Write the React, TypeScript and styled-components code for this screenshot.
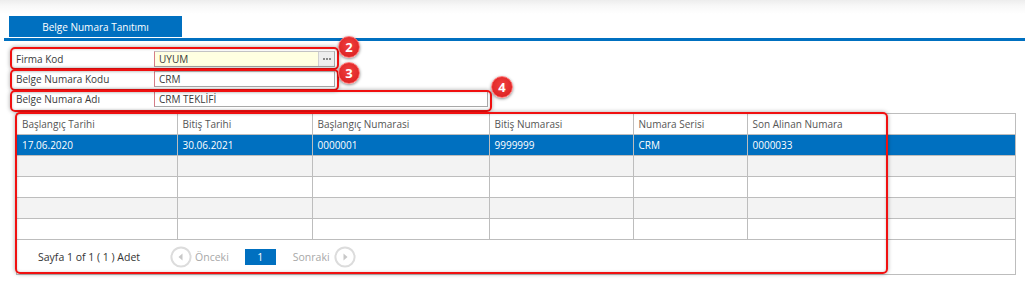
import styled, { createGlobalStyle } from "styled-components";

const GlobalStyle = createGlobalStyle`
  html, body {
    margin: 0;
    padding: 0;
    background: #fff;
  }
  body {
    font-family: "Open Sans", "Noto Sans", sans-serif;
    font-size: 10px;
    color: #333;
  }
`;

const columns = [
  { title: "Başlangıç Tarihi", width: 160 },
  { title: "Bitiş Tarihi", width: 135 },
  { title: "Başlangıç Numarasi", width: 177 },
  { title: "Bitiş Numarasi", width: 144 },
  { title: "Numara Serisi", width: 114 },
  { title: "Son Alinan Numara" },
];

const rows = [
  ["17.06.2020", "30.06.2021", "0000001", "9999999", "CRM", "0000033"],
  ["", "", "", "", "", ""],
  ["", "", "", "", "", ""],
  ["", "", "", "", "", ""],
  ["", "", "", "", "", ""],
];

const App = () => {
  return (
    <Page>
      <GlobalStyle />
      <TabStrip>
        <Tab>Belge Numara Tanıtımı</Tab>
      </TabStrip>
      <Divider />
      <Content>
        <FormRow>
          <Label>Firma Kod</Label>
          <Input $bg="#ffffe1" $width={181}>
            UYUM
            <LookupButton>
              <Dot />
              <Dot />
              <Dot />
            </LookupButton>
          </Input>
        </FormRow>
        <FormRow>
          <Label>Belge Numara Kodu</Label>
          <Input $width={181}>CRM</Input>
        </FormRow>
        <FormRow>
          <Label>Belge Numara Adı</Label>
          <Input $width={334}>CRM TEKLİFİ</Input>
        </FormRow>

        <GridFrame>
          <Table>
            <colgroup>
              {columns.map((c, i) => (
                <col key={i} style={c.width ? { width: c.width } : undefined} />
              ))}
            </colgroup>
            <thead>
              <tr>
                {columns.map((c) => (
                  <HeadCell key={c.title}>{c.title}</HeadCell>
                ))}
              </tr>
            </thead>
            <tbody>
              {rows.map((r, i) => (
                <Row key={i} $selected={i === 0} $alt={i % 2 === 1}>
                  {r.map((v, j) => (
                    <Cell key={j}>{v}</Cell>
                  ))}
                </Row>
              ))}
            </tbody>
          </Table>
          <Pager>
            <PageInfo>Sayfa 1 of 1 ( 1 ) Adet</PageInfo>
            <NavIcon viewBox="0 0 22 22">
              <circle cx="11" cy="11" r="9.6" fill="#fff" stroke="#dcdcdc" strokeWidth="2" />
              <path d="M12.5 7.5 L8.5 11 L12.5 14.5 Z" fill="#c8c8c8" />
            </NavIcon>
            <NavText $gapLeft={3}>Önceki</NavText>
            <PageNumber>1</PageNumber>
            <NavText $gapLeft={0}>Sonraki</NavText>
            <NavIcon viewBox="0 0 22 22" style={{ marginLeft: 4 }}>
              <circle cx="11" cy="11" r="9.6" fill="#fff" stroke="#dcdcdc" strokeWidth="2" />
              <path d="M9.5 7.5 L13.5 11 L9.5 14.5 Z" fill="#c8c8c8" />
            </NavIcon>
          </Pager>
        </GridFrame>
      </Content>

      {/* annotation overlays */}
      <Marker style={{ left: 10, top: 47, width: 329, height: 23 }} />
      <Marker style={{ left: 10, top: 69, width: 329, height: 22 }} />
      <Marker style={{ left: 10, top: 90, width: 482, height: 22 }} />
      <Marker style={{ left: 15, top: 112, width: 873, height: 162 }} />
      <Badge style={{ left: 338, top: 36 }}>2</Badge>
      <Badge style={{ left: 338, top: 62 }}>3</Badge>
      <Badge style={{ left: 491, top: 76 }}>4</Badge>
    </Page>
  );
};

const Page = styled.div`
  position: relative;
  width: 1025px;
  height: 286px;
  overflow: hidden;
  background: linear-gradient(#ededed 0px, #f8f8f8 6px, #ffffff 14px);
`;

const TabStrip = styled.div`
  display: flex;
  padding: 16px 0 0 9px;
`;

const Tab = styled.div`
  width: 173px;
  height: 21px;
  background: #0070c0;
  color: #fff;
  font-size: 10px;
  display: flex;
  align-items: center;
  justify-content: center;
`;

const Divider = styled.div`
  margin: 1px 0 0 4px;
  height: 3px;
  background: #0070c0;
`;

const Content = styled.div`
  padding: 8px 0 0 16px;
`;

const FormRow = styled.div`
  display: flex;
  align-items: center;
  height: 20px;
`;

const Label = styled.div`
  width: 138px;
  color: #3a3a3a;
  font-size: 10px;
`;

const Input = styled.div<{ $bg?: string; $width: number }>`
  position: relative;
  box-sizing: border-box;
  width: ${(p) => p.$width}px;
  height: 16px;
  display: flex;
  align-items: center;
  padding-left: 4px;
  background: ${(p) => p.$bg || "#fff"};
  border: 1px solid #c4c4c4;
  border-right-color: #a8a8a8;
  border-bottom-color: #a8a8a8;
  border-left: 1px solid #d77c86;
  color: #3a3a3a;
  font-size: 10px;
`;

const LookupButton = styled.div`
  position: absolute;
  right: 0;
  top: 0;
  bottom: 0;
  width: 15px;
  background: #eeeeee;
  border-left: 1px solid #d0d0d0;
  display: flex;
  align-items: center;
  justify-content: center;
  gap: 1px;
`;

const Dot = styled.span`
  width: 2px;
  height: 2px;
  background: #888;
`;

const GridFrame = styled.div`
  margin-top: 4px;
  width: 1000px;
  box-sizing: border-box;
  border: 1px solid #bdbdbd;
  background: #fff;
`;

const Table = styled.table`
  width: 100%;
  border-collapse: collapse;
  table-layout: fixed;
`;

const HeadCell = styled.th`
  height: 20px;
  padding: 0 0 0 5px;
  text-align: left;
  font-weight: normal;
  font-size: 10px;
  color: #555;
  border-bottom: 1px solid #bdbdbd;
  border-right: 1px solid #bdbdbd;
  &:last-child {
    border-right: none;
  }
`;

const Row = styled.tr<{ $selected?: boolean; $alt?: boolean }>`
  background: ${(p) => (p.$selected ? "#0070c0" : p.$alt ? "#f3f3f3" : "#fff")};
  color: ${(p) => (p.$selected ? "#fff" : "#333")};
`;

const Cell = styled.td`
  height: 20px;
  padding: 0 0 0 5px;
  font-size: 10px;
  border-bottom: 1px solid #bdbdbd;
  border-right: 1px solid #bdbdbd;
  &:last-child {
    border-right: none;
  }
`;

const Pager = styled.div`
  height: 34px;
  display: flex;
  align-items: center;
  padding-left: 21px;
`;

const PageInfo = styled.span`
  font-size: 10.5px;
  color: #333;
  margin-right: 30px;
`;

const NavIcon = styled.svg`
  width: 22px;
  height: 22px;
`;

const NavText = styled.span<{ $gapLeft: number }>`
  margin-left: ${(p) => p.$gapLeft}px;
  font-size: 10.5px;
  color: #a8a8a8;
`;

const PageNumber = styled.div`
  width: 31px;
  height: 16px;
  margin: 0 17px 0 16px;
  background: #0070c0;
  color: #fff;
  font-size: 10.5px;
  display: flex;
  align-items: center;
  justify-content: center;
`;

const Marker = styled.div`
  position: absolute;
  box-sizing: border-box;
  border: 2px solid #f01010;
  border-radius: 5px;
  box-shadow: 0 0 4px rgba(0, 0, 0, 0.35), inset 0 0 3px rgba(0, 0, 0, 0.2);
  pointer-events: none;
`;

const Badge = styled.div`
  position: absolute;
  width: 22px;
  height: 22px;
  box-sizing: border-box;
  border-radius: 50%;
  background: radial-gradient(circle at 50% 40%, #f04040, #d81c1c);
  border: 1px solid #f77;
  box-shadow: 0 1px 3px rgba(0, 0, 0, 0.45);
  color: #fff;
  font-family: "Open Sans", sans-serif;
  font-weight: bold;
  font-size: 13px;
  display: flex;
  align-items: center;
  justify-content: center;
`;

export default App;
